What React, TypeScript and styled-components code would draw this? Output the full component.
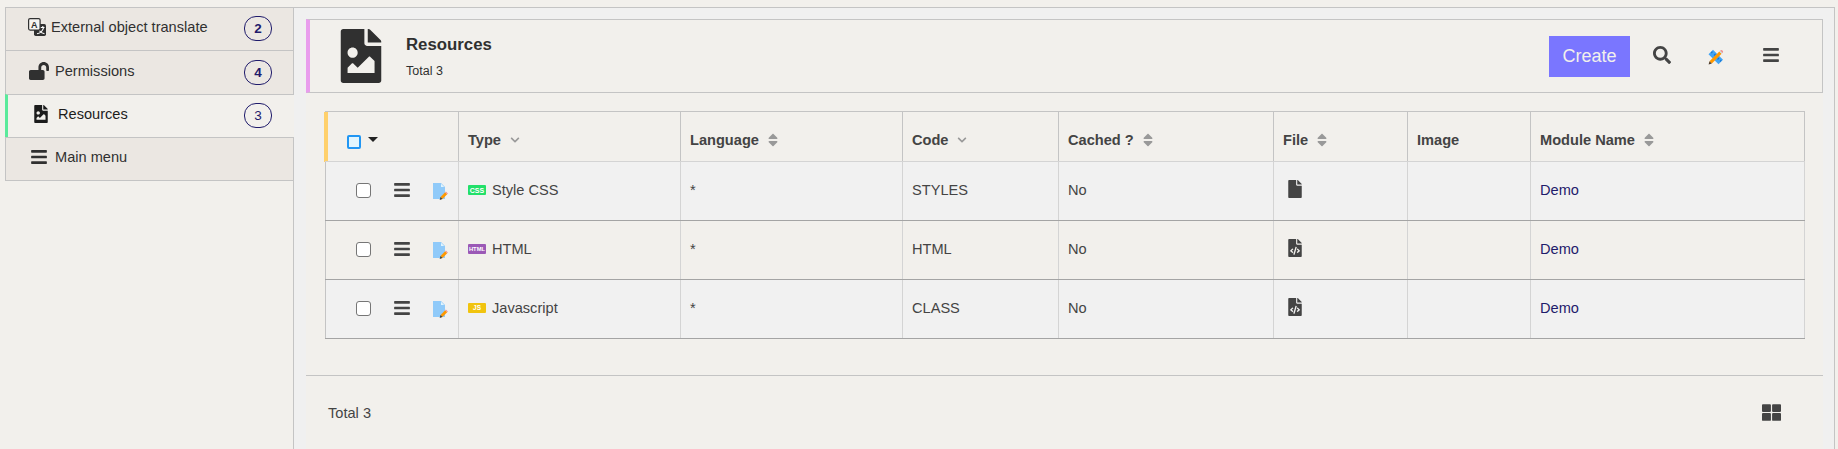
import React from "react";
import styled, { createGlobalStyle } from "styled-components";
import { FaBars, FaSearch, FaThLarge, FaSort, FaChevronDown, FaFileImage, FaLockOpen, FaFile, FaFileCode } from "react-icons/fa";

const Global = createGlobalStyle`
  * { box-sizing: border-box; }
  body { margin: 0; background: #f2f0ec; color: #444; font: 14.6px/20px "Liberation Sans", Arial, sans-serif; overflow: hidden; }
  svg { display: block; flex: none; }
`;

const Page = styled.div`
  display: flex;
  height: 449px;
  padding: 7px 3px 0 5px;
`;

const Sidebar = styled.nav`
  width: 288px;
  flex: none;
`;

const Tab = styled.div<{ $active?: boolean; $gap: number; $left: number; $h: number }>`
  display: flex;
  align-items: center;
  height: ${(p) => p.$h}px;
  margin-right: ${(p) => (p.$active ? -1 : 0)}px;
  position: relative;
  gap: ${(p) => p.$gap}px;
  padding: 0 ${(p) => (p.$active ? 22 : 21)}px 4px ${(p) => p.$left - (p.$active ? 3 : 1)}px;
  border-top: 1px solid #c4c4c4;
  border-left: ${(p) => (p.$active ? "3px solid #5aea9b" : "1px solid #c4c4c4")};
  background: ${(p) => (p.$active ? "#f2f0ec" : "#ebe7e2")};
  color: ${(p) => (p.$active ? "#1c1c1c" : "#303030")};
  &:last-child { border-bottom: 1px solid #c4c4c4; }
`;

const Badge = styled.span<{ $bold: boolean }>`
  margin: 3px 0 0 auto;
  width: 28px;
  height: 25px;
  border: 1px solid #1f1b6b;
  border-radius: 12px;
  color: #1f1b6b;
  text-align: center;
  font-size: 13.5px;
  line-height: 23px;
  font-weight: ${(p) => (p.$bold ? 700 : 400)};
`;

const Panel = styled.section`
  flex: 1;
  padding: 11px 11px 0 12px;
  border: 1px solid #c4c4c4;
  border-bottom: 0;
  background: #f0f0f0;
`;

const Content = styled.div`
  height: 100%;
  background: #f2f0ec;
`;

const Header = styled.header`
  display: flex;
  align-items: center;
  height: 74px;
  padding: 0 42px 0 24px;
  border: 1px solid #c4c4c4;
  border-left: 4px solid #e99ded;
  color: #303030;
`;

const Titles = styled.div`
  margin: 3px auto 0 18px;
`;

const Title = styled.h1`
  margin: 0 0 6px;
  font-size: 16.8px;
  line-height: 20px;
`;

const Subtitle = styled.div`
  font-size: 12.5px;
  line-height: 20px;
`;

const Create = styled.button`
  width: 81px;
  height: 41px;
  margin-top: 1px;
  padding: 0;
  border: 0;
  background: #7a76ff;
  color: #f2f0ec;
  font: 18px "Liberation Sans", Arial, sans-serif;
`;

const Tools = styled.div`
  display: flex;
  align-items: center;
  gap: 37px;
  margin-left: 23px;
  padding-bottom: 2px;
  color: #444;
`;

const DesignSlot = styled.span`
  width: 17px;
  margin-top: 4px;
`;

const Table = styled.table`
  width: 1480px;
  margin: 18px 0 0 19px;
  border-collapse: collapse;
  table-layout: fixed;
`;

const Th = styled.th`
  height: 50px;
  padding: 6px 0 0 9px;
  border: 1px solid #c4c4c4;
  border-bottom-color: #d4d4d4;
  text-align: left;
  &:first-child { border-left-color: #ffd06b; box-shadow: inset 2px 0 0 #ffd06b, -2px 0 0 #ffd06b; }
`;

const Td = styled.td`
  height: 59px;
  padding: 0 0 3px 9px;
  border: 1px solid #d4d4d4;
  border-bottom-color: #a4a4a4;
  &:first-child { border-left-color: #c4c4c4; }
`;

const Tr = styled.tr`
  &:nth-child(odd) { background: #f1f1f1; }
`;

const Line = styled.div<{ $gap?: number; $left?: number }>`
  display: flex;
  align-items: center;
  gap: ${(p) => p.$gap ?? 6}px;
  padding-left: ${(p) => p.$left ?? 0}px;
`;

const SortDown = styled(FaChevronDown)`
  margin-left: 3px;
  margin-top: 1px;
`;

const SelectAll = styled.span`
  width: 14px;
  height: 14px;
  margin-top: 5px;
  border: 2px solid #2196f3;
  border-radius: 2px;
  background: #e1f5fe;
`;

const Caret = styled.span`
  border: 5px solid transparent;
  border-top-color: #222;
  border-bottom: 0;
`;

const Check = styled.span`
  width: 15px;
  height: 15px;
  margin-top: 1px;
  border: 1px solid #767676;
  border-radius: 3px;
  background: #fff;
`;

const EditSlot = styled.span`
  margin: 4px 0 0 -1px;
`;

const FileSlot = styled.span`
  display: block;
  padding: 0 0 2px 3px;
`;

const Link = styled.span`
  color: #1f1b6b;
`;

const Footer = styled.footer`
  display: flex;
  align-items: center;
  justify-content: space-between;
  height: 74px;
  margin-top: 36px;
  padding: 0 42px 0 22px;
  border-top: 1px solid #c4c4c4;
`;

const TranslateIcon = () => (
  <svg width="18" height="18" viewBox="0 0 18 18">
    <path d="M7 6h9.300Q18 6 18 7.700v8.600Q18 18 16.300 18H7.700Q6 18 6 16.300V7Z" fill="#303030" />
    <rect x=".6" y=".6" width="11.500" height="11.500" rx="1.500" fill="#f7f5f2" stroke="#303030" strokeWidth="1.2" />
    <text x="6.300" y="9.600" textAnchor="middle" fontSize="9" fontWeight="700" fill="#303030">A</text>
    <path d="M12.800 9.500h3.700M14.800 8v1.500M15.500 9.800q-1.500 5-6.500 6M11.500 12.800q1.500 2.500 5 3" fill="none" stroke="#fff" strokeWidth="1.100" />
  </svg>
);

const DesignIcon = () => (
  <svg width="16" height="16" viewBox="0 0 16 16">
    <path d="M.5 5.300 5 .8 15 10.800 10.500 15.300Z" fill="#42a5f5" />
    <path d="m3.200 4 1.300-1.300M6 6.500l1.500-1.500M9.500 10.500l1.500-1.500M12 12.500l1.300-1.300" stroke="#1976d2" strokeWidth="1.200" />
    <path d="m1.500 12.300 9.800-9.800 2.300 2.300-9.800 9.800Z" fill="#ff9800" />
    <path d="m11.300 2.500.9-.9 2.300 2.300-.9.900Z" fill="#cfd8dc" />
    <path d="m12.200 1.600.4-.4q.9-.7 1.900.200t.400 2.100l-.4.4Z" fill="#ef8e8e" />
    <path d="m1.500 12.300 2.300 2.300L.6 15.500Z" fill="#4e3b2a" />
  </svg>
);

const EditIcon = () => (
  <svg width="16" height="18" viewBox="0 0 16 18">
    <path d="M1 0h8l4 4v12H1Z" fill="#90caf9" />
    <path d="M9 .8 12.200 4H9Z" fill="#e1f5fe" />
    <path d="m8.500 14 4.700-4.700 2 2-4.700 4.700Z" fill="#ff9800" />
    <path d="m13.200 9.300.7-.7 2 2-.7.700Z" fill="#ef8e8e" />
    <path d="m8.500 14 2 2-2.800.9Z" fill="#453a2a" />
  </svg>
);

const Tag = ({ label, color, size }: { label: string; color: string; size: number }) => (
  <svg width="18" height="10" viewBox="0 0 18 10">
    <rect width="18" height="10" rx="1" fill={color} />
    <text x="9" y={5 + size * 0.36} textAnchor="middle" fontSize={size} fontWeight="700" fill="#fff">{label}</text>
  </svg>
);

const columns = [
  { name: "Type", sort: "down", w: 222 },
  { name: "Language", sort: "both", w: 222 },
  { name: "Code", sort: "down", w: 156 },
  { name: "Cached ?", sort: "both", w: 215 },
  { name: "File", sort: "both", w: 134 },
  { name: "Image", sort: "", w: 123 },
  { name: "Module Name", sort: "both", w: 274 },
];

const rows = [
  { tag: "CSS", color: "#22e06a", size: 7, type: "Style CSS", code: "STYLES", plain: true },
  { tag: "HTML", color: "#9b59b6", size: 5.8, type: "HTML", code: "HTML", plain: false },
  { tag: "JS", color: "#f1c40f", size: 6.5, type: "Javascript", code: "CLASS", plain: false },
];

export default function App() {
  return (
    <Page>
      <Global />
      <Sidebar>
        <Tab $h={43} $left={23} $gap={5}><TranslateIcon />External object translate<Badge $bold>2</Badge></Tab>
        <Tab $h={44} $left={24} $gap={6}><FaLockOpen size={20} />Permissions<Badge $bold>4</Badge></Tab>
        <Tab $h={43} $left={27} $gap={8} $active><FaFileImage size={18} />Resources<Badge $bold={false}>3</Badge></Tab>
        <Tab $h={44} $left={25} $gap={7}><FaBars size={18} />Main menu</Tab>
      </Sidebar>
      <Panel>
        <Content>
          <Header>
            <FaFileImage size={54} />
            <Titles>
              <Title>Resources</Title>
              <Subtitle>Total 3</Subtitle>
            </Titles>
            <Create>Create</Create>
            <Tools>
              <FaSearch size={18} />
              <DesignSlot><DesignIcon /></DesignSlot>
              <FaBars size={18} />
            </Tools>
          </Header>
          <Table>
            <colgroup>
              <col style={{ width: 133 }} />
              {columns.map((c) => <col key={c.name} style={{ width: c.w }} />)}
            </colgroup>
            <thead>
              <tr>
                <Th><Line $left={12} $gap={7}><SelectAll /><Caret /></Line></Th>
                {columns.map((c) => (
                  <Th key={c.name}>
                    <Line>
                      {c.name}
                      {c.sort === "down" && <SortDown size={10} color="#999" />}
                      {c.sort === "both" && <FaSort size={16} color="#999" />}
                    </Line>
                  </Th>
                ))}
              </tr>
            </thead>
            <tbody>
              {rows.map((r) => (
                <Tr key={r.code}>
                  <Td><Line $left={21} $gap={22}><Check /><FaBars size={18} /><EditSlot><EditIcon /></EditSlot></Line></Td>
                  <Td><Line $gap={6}><Tag label={r.tag} color={r.color} size={r.size} />{r.type}</Line></Td>
                  <Td>*</Td>
                  <Td>{r.code}</Td>
                  <Td>No</Td>
                  <Td><FileSlot>{r.plain ? <FaFile size={18} /> : <FaFileCode size={18} />}</FileSlot></Td>
                  <Td />
                  <Td><Link>Demo</Link></Td>
                </Tr>
              ))}
            </tbody>
          </Table>
          <Footer>Total 3<FaThLarge size={19} /></Footer>
        </Content>
      </Panel>
    </Page>
  );
}
